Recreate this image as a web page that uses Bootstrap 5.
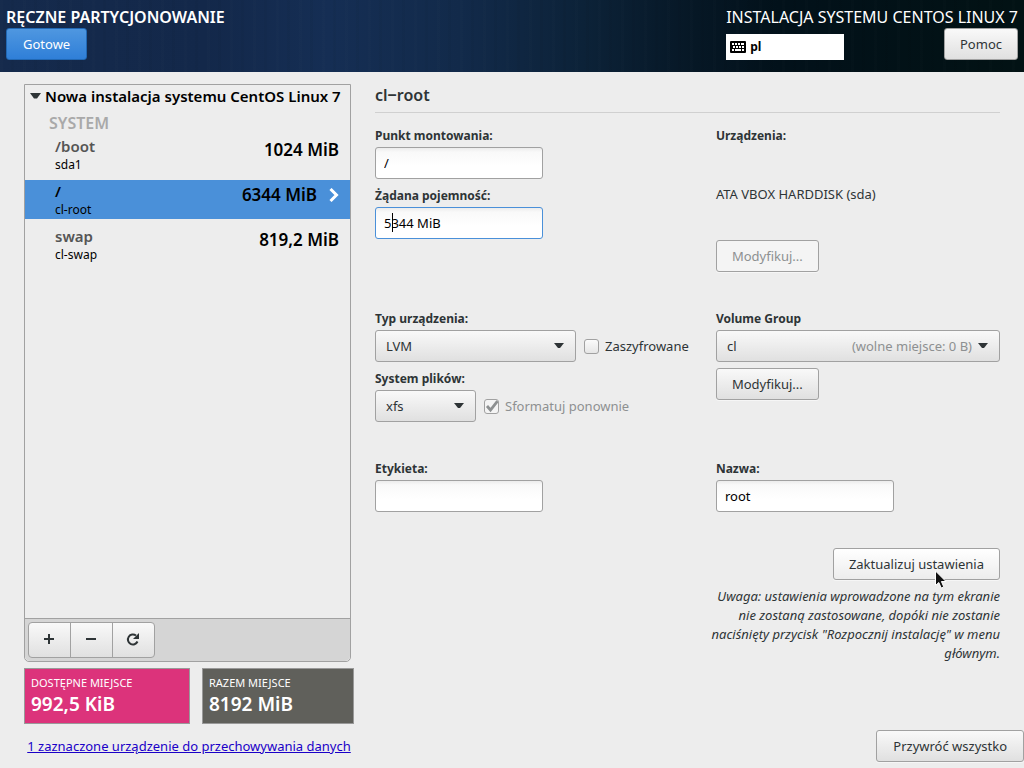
<!DOCTYPE html>
<html lang="pl">
<head>
<meta charset="utf-8">
<meta name="viewport" content="width=device-width, initial-scale=1">
<title>Ręczne partycjonowanie</title>
<link href="https://cdn.jsdelivr.net/npm/bootstrap@5.3.0/dist/css/bootstrap.min.css" rel="stylesheet">
<style>
  :root { --ink: #2e3436; --edge: #a1a1a1; --sel: #4a90d9; }
  body { font: 13px/20px "Noto Sans", "Open Sans", sans-serif; color: var(--ink); background: #ededed; }

  .top-bar {
    color: #fff; padding: 6px 6px 12px;
    background:
      repeating-linear-gradient(90deg, rgba(255,255,255,.008) 0 3px, transparent 3px 11px, rgba(0,0,0,.03) 11px 14px, transparent 14px 23px),
      linear-gradient(90deg, #152a4c 0, #13284a 20%, #152e54 32%, #122a4a 45%, #0c2238 57%, #061725 68%, #02111a 76%, #021214 100%);
  }
  .top-title { font-size: 16px; line-height: 22px; }
  .top-title.strong { font-weight: 600; }
  .kbd-box { width: 118px; height: 26px; padding: 0 4px; gap: 4px; background: #fff; color: #000; border: 0; font-weight: 700; font-size: 12px; }

  .g-btn {
    height: 32px; padding: 0 16px; border: 1px solid var(--edge); border-radius: 3px;
    background: linear-gradient(#f9f9f9, #e0e0e0); color: var(--ink);
    font-size: 13px; line-height: 20px; white-space: nowrap; box-shadow: 0 1px #f6f6f6;
  }
  .g-btn:disabled { background: #f4f4f4; color: #8d9091; }
  .g-btn.hovered { background: linear-gradient(#fff, #ededed); }
  .g-btn.snug { padding: 0 15px; }
  .top-bar .g-btn { box-shadow: none; }
  .g-btn.go { background: linear-gradient(#4f97e0, #2f7fd8); border-color: #2168b4; color: #fff; }

  .column-top { padding-top: 12px; }
  .side { width: 330px; }
  .side-panel { margin-right: 3px; border: 1px solid var(--edge); border-radius: 0 0 5px 5px; }
  .expander { padding: 1px 5px; gap: 4px; border: 0; background: none; color: #000; font-size: 15px; font-weight: 600; white-space: nowrap; }
  .group-name { margin: 6px 0 2px 24px; font-size: 16px; line-height: 20px; font-weight: 600; color: #a9a9a9; }
  .mount { height: 39px; padding: 0 11px 0 30px; margin-bottom: 6px; border: 0; background: none; color: #000; text-align: left; }
  .mount .path { font-size: 15px; font-weight: 600; line-height: 22px; color: #555; }
  .mount .dev { font-size: 12px; line-height: 16px; }
  .mount .size { height: 30px; font-size: 17px; font-weight: 600; line-height: 30px; }
  .mount.current { background: var(--sel); }
  .mount.current .path { color: #000; }
  .tools { padding: 3px; border-top: 1px solid var(--edge); border-radius: 0 0 5px 5px; background: #d5d5d5; }
  .tools .g-btn { display: flex; align-items: center; justify-content: center; width: 43px; height: 36px; padding: 0 2px 2px 0; margin-right: -1px; border-radius: 0; box-shadow: none; }
  .tools .g-btn:first-child { border-radius: 4px 0 0 4px; }
  .tools .g-btn:last-child { border-radius: 0 4px 4px 0; }

  .space-row { margin-top: 6px; }
  .space-box { height: 56px; padding: 5px 6px; border: 1px solid #999; color: #fff; }
  .space-box .cap { font-size: 11px; line-height: 18px; }
  .space-box .val { font-size: 19px; font-weight: 600; line-height: 24px; }
  .space-free { width: 166px; background: #dc337b; }
  .space-all { width: 152px; background: #60605b; }

  .detail { margin-left: 21px; }
  .detail-name { font-size: 16px; font-weight: 600; line-height: 22px; padding-bottom: 6px; margin-bottom: 12px; border-bottom: 1px solid #d0d0d0; }
  .form-area { display: grid; grid-template-columns: 6fr 5fr; row-gap: 36px; }
  .f-label { display: block; line-height: 22px; font-size: 12px; font-weight: 700; }
  .f-next { margin-top: 6px; }
  .f-input {
    display: block; width: 168px; height: 32px; padding: 0 8px; border: 1px solid var(--edge); border-radius: 3px;
    background: linear-gradient(#ececec 0, #f9f9f9 4px, #fff 18px); color: #000; outline: 0;
  }
  .f-input.active-field { border-color: var(--sel); }
  .caret-line { position: absolute; left: 17px; top: 6px; width: 1px; height: 19px; background: #000; }
  .f-select {
    appearance: none; height: 32px; padding: 0 28px 0 10px; border: 1px solid var(--edge); border-radius: 3px; color: var(--ink);
    background: url("data:image/svg+xml,%3Csvg xmlns='http://www.w3.org/2000/svg' width='10' height='5'%3E%3Cpath d='M0 0h10L6 5H4z' fill='%232e3436'/%3E%3C/svg%3E") no-repeat right 11px top 12px, linear-gradient(#f9f9f9, #e0e0e0);
  }
  .w-type { width: 201px; }
  .w-fs { width: 101px; }
  .w-name { width: 178px; }
  .free-note { position: absolute; right: 28px; top: 6px; color: #8d9091; pointer-events: none; }
  .f-check { appearance: none; width: 15px; height: 15px; margin: 0 6px 0 8px; border: 1px solid var(--edge); border-radius: 3px; background: linear-gradient(#fbfbfb, #e6e6e6); }
  .f-check:checked {
    background: #f4f4f4 url("data:image/svg+xml,%3Csvg xmlns='http://www.w3.org/2000/svg' width='13' height='13'%3E%3Cpath d='M2 6l3.500 4L12.500 1' fill='none' stroke='%238d9091' stroke-width='2.800'/%3E%3C/svg%3E") center no-repeat;
  }
  .dimmed { color: #8d9091; }
  .device-area { min-height: 93px; }
  .apply-area { margin-top: 36px; }
  .note { max-width: 298px; line-height: 19px; padding-top: 7px; font-style: italic; text-align: right; }
  .pointer { position: absolute; right: 52px; top: 22px; pointer-events: none; }
  .foot { padding: 6px 0 6px 24px; }
  .foot a { color: #1a00c8; }
</style>
</head>
<body>
<div class="min-vh-100 d-flex flex-column">
  <header class="top-bar d-flex justify-content-between">
    <div>
      <div class="top-title strong">RĘCZNE PARTYCJONOWANIE</div>
      <button type="button" class="g-btn go">Gotowe</button>
    </div>
    <div>
      <div class="top-title">INSTALACJA SYSTEMU CENTOS LINUX 7</div>
      <div class="d-flex justify-content-between align-items-end">
        <button type="button" class="kbd-box d-flex align-items-center">
          <svg width="16" height="12" viewBox="0 0 16 12" aria-hidden="true"><rect width="16" height="12" rx="1"/><path fill="#fff" d="M2 2h2v2H2zM5 2h2v2H5zM8 2h2v2H8zM11 2h3v2h-3zM3 5h2v2H3zM6 5h2v2H6zM9 5h2v2H9zM12 5h2v2h-2zM2 8h2v2H2zM5 8h6v2H5zM12 8h2v2h-2z"/></svg>
          pl
        </button>
        <button type="button" class="g-btn snug">Pomoc</button>
      </div>
    </div>
  </header>

  <main class="flex-grow-1 d-flex px-4">
    <section class="side column-top flex-shrink-0 d-flex flex-column">
      <div class="side-panel flex-grow-1 d-flex flex-column">
        <button type="button" class="expander d-flex align-items-center" data-bs-toggle="collapse" data-bs-target="#mounts">
          <svg width="11" height="6" aria-hidden="true"><path d="M0 0h11L7 5.500H4z" fill="#2e3436"/></svg>
          Nowa instalacja systemu CentOS Linux 7
        </button>
        <div id="mounts" class="collapse show">
          <div class="group-name">SYSTEM</div>
          <button type="button" class="mount w-100 d-flex justify-content-between align-items-start">
            <span class="d-flex flex-column"><span class="path">/boot</span><span class="dev">sda1</span></span>
            <span class="size">1024 MiB</span>
          </button>
          <button type="button" class="mount current w-100 d-flex justify-content-between align-items-start">
            <span class="d-flex flex-column"><span class="path">/</span><span class="dev">cl-root</span></span>
            <span class="size d-flex align-items-center gap-2">6344 MiB
              <svg class="ms-1" width="10" height="14" aria-hidden="true"><path d="M1.500 1l6 6-6 6" fill="none" stroke="#fff" stroke-width="3"/></svg>
            </span>
          </button>
          <button type="button" class="mount w-100 d-flex justify-content-between align-items-start">
            <span class="d-flex flex-column"><span class="path">swap</span><span class="dev">cl-swap</span></span>
            <span class="size">819,2 MiB</span>
          </button>
        </div>
        <div class="tools d-flex mt-auto">
          <button type="button" class="g-btn" aria-label="Dodaj"><svg width="12" height="12"><path d="M6 1v10M1 6h10" stroke="#2e3436" stroke-width="2"/></svg></button>
          <button type="button" class="g-btn" aria-label="Usuń"><svg width="12" height="12"><path d="M1 6h10" stroke="#2e3436" stroke-width="2"/></svg></button>
          <button type="button" class="g-btn" aria-label="Odśwież"><svg width="14" height="14"><path d="M10 3.500A5 5 0 1 0 11.500 9.500" fill="none" stroke="#2e3436" stroke-width="2"/><path d="M13 1v6H7z" fill="#2e3436"/></svg></button>
        </div>
      </div>
      <div class="space-row d-flex justify-content-between">
        <div class="space-box space-free"><div class="cap">DOSTĘPNE MIEJSCE</div><div class="val">992,5 KiB</div></div>
        <div class="space-box space-all"><div class="cap">RAZEM MIEJSCE</div><div class="val">8192 MiB</div></div>
      </div>
    </section>

    <section class="detail column-top flex-grow-1">
      <h1 class="detail-name">cl‒root</h1>
      <div class="form-area">
        <div>
          <label class="f-label" for="mp">Punkt montowania:</label>
          <input class="f-input" id="mp" value="/">
          <label class="f-label f-next" for="cap">Żądana pojemność:</label>
          <div class="position-relative">
            <input class="f-input active-field" id="cap" value="5344 MiB">
            <span class="caret-line"></span>
          </div>
        </div>
        <div>
          <div class="f-label">Urządzenia:</div>
          <div class="device-area d-flex align-items-center">ATA VBOX HARDDISK (sda)</div>
          <button type="button" class="g-btn snug" disabled>Modyfikuj...</button>
        </div>

        <div>
          <label class="f-label" for="typ">Typ urządzenia:</label>
          <div class="d-flex align-items-center">
            <select class="f-select w-type" id="typ"><option>LVM</option></select>
            <input class="f-check" type="checkbox" id="enc"><label for="enc">Zaszyfrowane</label>
          </div>
          <label class="f-label f-next" for="fs">System plików:</label>
          <div class="d-flex align-items-center">
            <select class="f-select w-fs" id="fs"><option>xfs</option></select>
            <input class="f-check" type="checkbox" id="fmt" checked disabled><label class="dimmed" for="fmt">Sformatuj ponownie</label>
          </div>
        </div>
        <div>
          <label class="f-label" for="vg">Volume Group</label>
          <div class="position-relative">
            <select class="f-select d-block w-100" id="vg"><option>cl</option></select>
            <span class="free-note">(wolne miejsce: 0 B)</span>
          </div>
          <button type="button" class="g-btn snug f-next">Modyfikuj...</button>
        </div>

        <div>
          <label class="f-label" for="lab">Etykieta:</label>
          <input class="f-input" id="lab">
        </div>
        <div>
          <label class="f-label" for="nm">Nazwa:</label>
          <input class="f-input w-name" id="nm" value="root">
        </div>
      </div>
      <div class="apply-area d-flex flex-column align-items-end">
        <div class="position-relative">
          <button type="button" class="g-btn snug hovered">Zaktualizuj ustawienia</button>
          <svg class="pointer" width="14" height="20" aria-hidden="true"><path d="M1.500 1v14.500l3.300-3 2.400 5.500 2.600-1.100-2.400-5.400H12z" fill="#111" stroke="#fff"/></svg>
        </div>
        <p class="note mb-0">Uwaga: ustawienia wprowadzone na tym ekranie nie zostaną zastosowane, dopóki nie zostanie naciśnięty przycisk "Rozpocznij instalację" w menu głównym.</p>
      </div>
    </section>
  </main>

  <footer class="foot d-flex justify-content-between align-items-center">
    <div class="side text-center"><a href="#">1 zaznaczone urządzenie do przechowywania danych</a></div>
    <button type="button" class="g-btn">Przywróć wszystko</button>
  </footer>
</div>
<script src="https://cdn.jsdelivr.net/npm/bootstrap@5.3.0/dist/js/bootstrap.bundle.min.js"></script>
</body>
</html>
